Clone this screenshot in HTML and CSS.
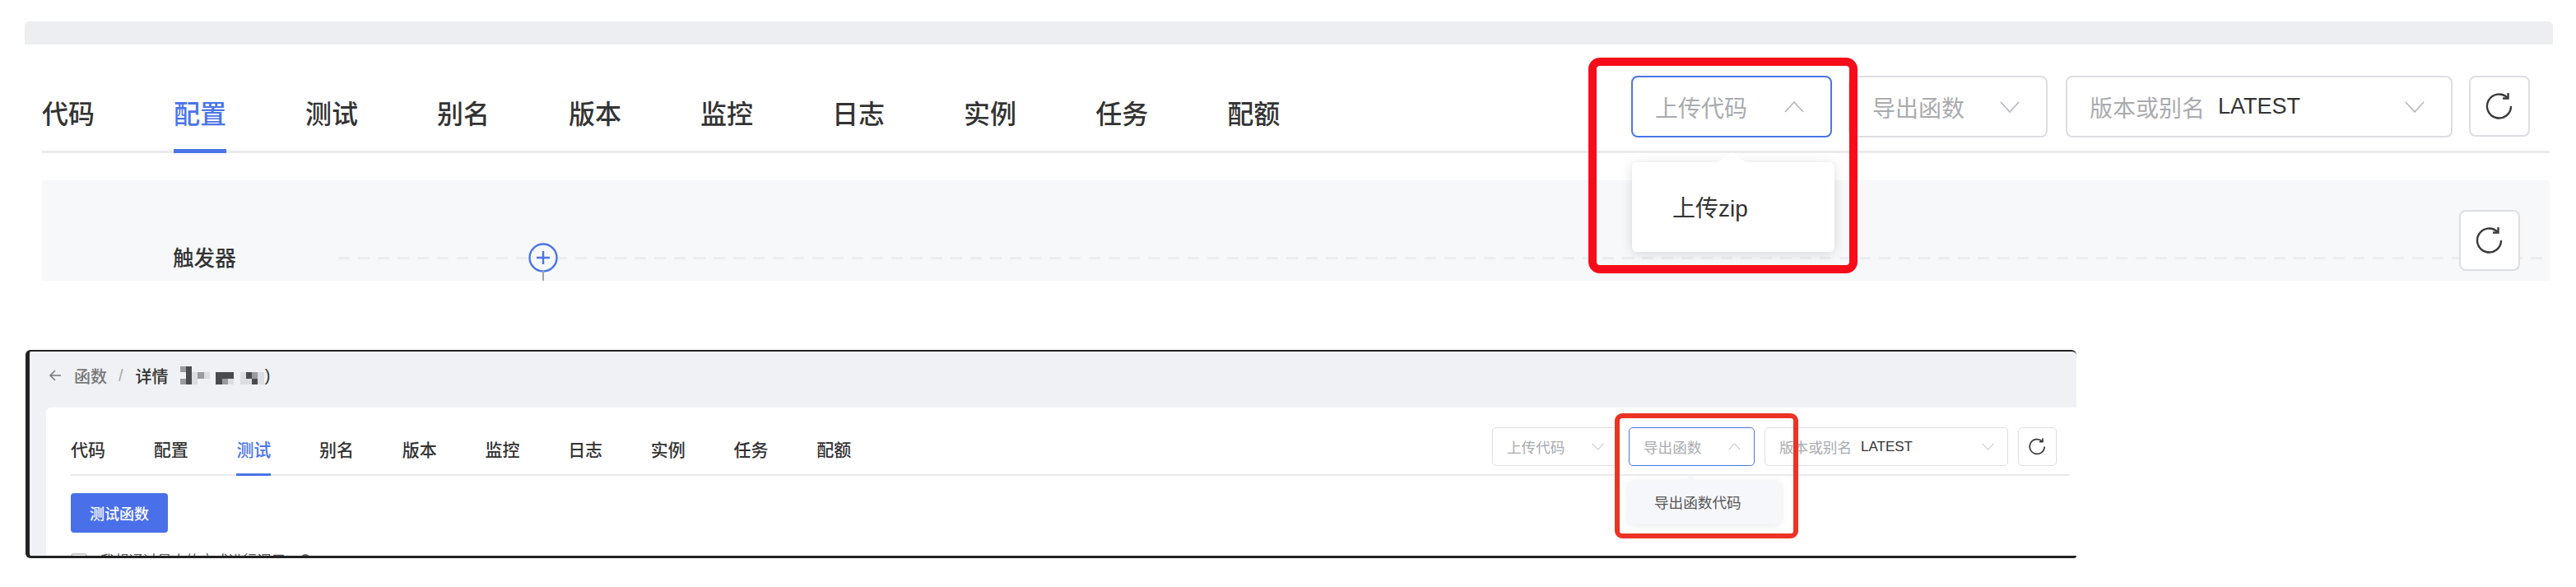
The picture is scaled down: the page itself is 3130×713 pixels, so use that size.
FILE: index.html
```html
<!DOCTYPE html>
<html lang="en">

<head>
  <meta charset="UTF-8">
  <title>函数详情</title>
  <link rel="stylesheet" href="styles.css">
</head>

<body>
  <!-- 上传代码 -->
  <section class="shot-top">
    <div class="top-bar"></div>
    <div class="top-body">
      <div class="tabs-row">
        <a class="tab">代码</a>
        <a class="tab active">配置</a>
        <a class="tab">测试</a>
        <a class="tab">别名</a>
        <a class="tab">版本</a>
        <a class="tab">监控</a>
        <a class="tab">日志</a>
        <a class="tab">实例</a>
        <a class="tab">任务</a>
        <a class="tab">配额</a>
        <div class="tools">
          <div class="select s-upload open">
            <span class="ph">上传代码</span>
            <svg class="chev" viewBox="0 0 24 14"><path d="M1 13 12 1l11 12"/></svg>
            <div class="menu">
              <i class="menu-arrow"></i>
              <div class="menu-item">上传zip</div>
            </div>
          </div>
          <div class="select s-export">
            <span class="ph">导出函数</span>
            <svg class="chev" viewBox="0 0 24 14"><path d="M1 1l11 12L23 1"/></svg>
          </div>
          <div class="select s-version">
            <span class="ph">版本或别名</span><span class="val">LATEST</span>
            <svg class="chev" viewBox="0 0 24 14"><path d="M1 1l11 12L23 1"/></svg>
          </div>
          <button class="refresh">
            <svg viewBox="0 0 34 34"><path d="M31 17A14.5 14.5 0 1 1 26.5 6.500"/><path d="M27.500 1v6.500H21"/></svg>
          </button>
        </div>
      </div>

      <div class="panel">
        <div class="trigger-row">
          <span class="trigger-label">触发器</span>
          <div class="track">
            <span class="add-btn">
              <svg viewBox="0 0 36 36"><circle cx="18" cy="18" r="16.500"/><path d="M10 18h16M18 10v16"/></svg>
            </span>
          </div>
        </div>
        <button class="refresh panel-refresh">
          <svg viewBox="0 0 34 34"><path d="M31 17A14.5 14.5 0 1 1 26.5 6.500"/><path d="M27.500 1v6.500H21"/></svg>
        </button>
      </div>
    </div>
    <div class="mark mark-upload"></div>
  </section>

  <!-- 导出函数 -->
  <section class="shot-bottom">
    <div class="crumbs">
      <svg class="back" viewBox="0 0 16 18"><path d="M15 9H2M8 3 2 9l6 6"/></svg>
      <span class="crumb-muted">函数</span>
      <span class="crumb-sep">/</span>
      <span class="crumb-cur">详情</span>
      <!-- 打码的名称 -->
      <span class="blur-name">
        <i class="m"></i><i class="d"></i><i></i><i></i><i></i><i></i><i></i><i></i><i></i><i></i><i></i><i></i><i></i><i></i>
        <i></i><i class="d"></i><i class="l"></i><i class="m"></i><i class="l"></i><i></i><i class="d"></i><i class="d"></i><i class="d"></i><i></i><i class="l"></i><i class="d"></i><i class="m"></i><i class="l"></i>
        <i class="m"></i><i class="d"></i><i class="l"></i><i></i><i></i><i></i><i class="d"></i><i class="m"></i><i class="l"></i><i></i><i class="l"></i><i class="l"></i><i class="d"></i><i class="l"></i>
      </span>
      <span class="crumb-cur">)</span>
    </div>
    <div class="card">
      <div class="tabs-row small">
        <a class="tab">代码</a>
        <a class="tab">配置</a>
        <a class="tab active">测试</a>
        <a class="tab">别名</a>
        <a class="tab">版本</a>
        <a class="tab">监控</a>
        <a class="tab">日志</a>
        <a class="tab">实例</a>
        <a class="tab">任务</a>
        <a class="tab">配额</a>
        <div class="tools">
          <div class="select s-upload">
            <span class="ph">上传代码</span>
            <svg class="chev" viewBox="0 0 24 14"><path d="M1 1l11 12L23 1"/></svg>
          </div>
          <div class="select s-export open">
            <span class="ph">导出函数</span>
            <svg class="chev" viewBox="0 0 24 14"><path d="M1 13 12 1l11 12"/></svg>
            <div class="menu">
              <i class="menu-arrow"></i>
              <div class="menu-item">导出函数代码</div>
            </div>
          </div>
          <div class="select s-version">
            <span class="ph">版本或别名</span><span class="val">LATEST</span>
            <svg class="chev" viewBox="0 0 24 14"><path d="M1 1l11 12L23 1"/></svg>
          </div>
          <button class="refresh">
            <svg viewBox="0 0 34 34"><path d="M31 17A14.5 14.5 0 1 1 26.5 6.500"/><path d="M27.500 1v6.500H21"/></svg>
          </button>
        </div>
      </div>
      <button class="btn-test">测试函数</button>
      <div class="check-row">
        <i class="checkbox"></i>
        <span class="check-text">我想通过最大的方式进行调用</span>
        <i class="dot"></i>
        <span class="check-val">00000</span>
      </div>
    </div>
    <div class="mark mark-export"></div>
  </section>
</body>

</html>
```

FILE: styles.css
```css
* {
  box-sizing: border-box;
}
body {
  margin: 0;
  background: #fff;
  font-family: "Liberation Sans", "Noto Sans CJK SC", sans-serif;
  color: #333;
}
svg {
  display: block;
  fill: none;
}

/* shared tabs */
.tabs-row {
  display: flex;
  align-items: flex-start;
  height: 132px;
  border-bottom: 3px solid #e9eaec;
  gap: 96px;
}
.tab {
  height: 132px;
  padding-top: 69px;
  font-size: 32px;
  line-height: 32px;
  font-weight: 500;
  color: #333;
  border-bottom: 5px solid transparent;
  flex: none;
}
.tab.active {
  color: #4a74e8;
  border-bottom-color: #4a74e8;
}
.tools {
  display: flex;
  margin-left: auto;
  margin-top: 38px;
  margin-right: 24px;
}

/* selects */
.select {
  position: relative;
  display: flex;
  align-items: center;
  flex: none;
  height: 75px;
  padding: 0 32px 0 27px;
  border: 2px solid #dcdee2;
  border-radius: 8px;
  font-size: 28px;
  background: #fff;
}
.select.open {
  border-color: #4a74e8;
}
.ph {
  color: #a9abaf;
}
.val {
  margin-left: 16px;
  font-size: 27px;
  color: #333;
}
.chev {
  width: 24px;
  height: 14px;
  margin-left: auto;
}
.chev path {
  stroke: #b4b6ba;
  stroke-width: 1.600;
}
.s-upload {
  width: 244px;
  margin-right: 20px;
}
.s-export {
  width: 242px;
  margin-right: 22px;
}
.s-version {
  width: 470px;
  margin-right: 20px;
}
.refresh {
  flex: none;
  width: 74px;
  height: 74px;
  padding: 18px;
  border: 2px solid #dcdee2;
  border-radius: 8px;
  background: #fff;
}
.refresh svg {
  width: 34px;
  height: 34px;
}
.refresh path {
  stroke: #3a3a3a;
  stroke-width: 2.400;
}

/* dropdown */
.menu {
  position: absolute;
  top: 103px;
  left: -1px;
  width: 246px;
  height: 109px;
  padding: 0 0 2px 49px;
  display: flex;
  align-items: center;
  background: #fff;
  border-radius: 6px;
  box-shadow: 0 2px 14px rgba(0, 0, 0, .14);
  z-index: 2;
}
.menu-arrow {
  position: absolute;
  top: -12px;
  left: 109px;
  width: 24px;
  height: 24px;
  background: #fff;
  transform: scaleY(.7) rotate(45deg);
}
.menu-item {
  position: relative;
  color: #333;
}

/* top shot */
.shot-top {
  position: relative;
  margin: 26px 28px 0 30px;
}
.top-bar {
  height: 28px;
  background: #eceef1;
  border-radius: 6px 6px 0 0;
}
.top-body {
  padding: 0 4px 0 21px;
}
.panel {
  position: relative;
  height: 122px;
  margin-top: 33px;
  padding-top: 75px;
  background: #f7f8fa;
  overflow: hidden;
}
.trigger-row {
  display: flex;
  align-items: center;
  height: 38px;
}
.trigger-label {
  flex: none;
  width: 360px;
  padding: 0 0 3px 159px;
  font-size: 25.600px;
  font-weight: 500;
  color: #333;
}
.track {
  position: relative;
  flex: 1;
  height: 3px;
  background: repeating-linear-gradient(90deg, #eceef1 0 14px, transparent 14px 24px);
}
.add-btn {
  position: absolute;
  top: -17px;
  left: 231px;
  width: 36px;
  height: 36px;
  background: #f7f8fa;
}
.add-btn::after {
  content: "";
  position: absolute;
  top: 34px;
  left: 17px;
  width: 2px;
  height: 14px;
  background: #a2a4a8;
}
.add-btn circle,
.add-btn path {
  stroke: #4a74e8;
  stroke-width: 2.400;
}
.panel-refresh {
  position: absolute;
  top: 36px;
  right: 36px;
}

/* annotation boxes */
.mark {
  position: absolute;
  pointer-events: none;
  z-index: 3;
}
.mark-upload {
  top: 44px;
  left: 1900px;
  width: 327px;
  height: 262px;
  border: 10px solid #f70d1a;
  border-radius: 14px;
}
.mark-export {
  top: 75px;
  left: 1926px;
  width: 223px;
  height: 152px;
  border: 6px solid #ec3324;
  border-radius: 9px;
}

/* bottom shot */
.shot-bottom {
  position: relative;
  width: 2492px;
  height: 253px;
  margin: 84px 0 0 31px;
  border-style: solid;
  border-color: #222;
  border-width: 2px 0 3px 5px;
  border-radius: 6px 6px 3px 6px;
  background: #eff1f4;
  overflow: hidden;
}
.crumbs {
  display: flex;
  align-items: center;
  height: 68px;
  padding: 0 0 10px 23px;
  font-size: 20px;
  font-weight: 500;
  color: #333;
}
.back {
  width: 16px;
  height: 18px;
  margin-right: 15px;
}
.back path {
  stroke: #777;
  stroke-width: 1.500;
}
.crumb-muted {
  color: #777;
}
.crumb-sep {
  margin: 0 15px 0 14px;
  color: #aaa;
  font-weight: 400;
}
.blur-name {
  display: grid;
  grid-template-columns: repeat(14, 7.300px);
  grid-auto-rows: 7.300px;
  margin: 0 1px 0 14px;
}
.blur-name .d {
  background: #4a4b4f;
}
.blur-name .m {
  background: #9a9b9f;
}
.blur-name .l {
  background: #dcdde1;
}
.card {
  height: 180px;
  margin-left: 20px;
  padding: 0 8px 0 30px;
  background: #fff;
  border-radius: 6px 0 0 0;
}
.tabs-row.small {
  height: 83px;
  border-bottom-width: 2px;
  gap: 58.700px;
}
.small .tab {
  height: 83px;
  padding-top: 41px;
  font-size: 21px;
  line-height: 21px;
  border-bottom-width: 3px;
}
.small .tools {
  margin-top: 24px;
  margin-right: 16px;
}
.small .select {
  height: 47px;
  padding: 0 16px 0 17px;
  font-size: 17.600px;
  border-width: 1.500px;
  border-radius: 5px;
}
.small .chev {
  width: 15px;
  height: 9px;
}
.small .val {
  margin-left: 11px;
  font-size: 17px;
}
.small .s-upload {
  width: 153px;
  margin-right: 13px;
}
.small .s-export {
  width: 153px;
  margin-right: 12px;
}
.small .s-version {
  width: 296px;
  margin-right: 12px;
}
.small .refresh {
  width: 47px;
  height: 47px;
  padding: 12px;
  border-width: 1.500px;
  border-radius: 5px;
}
.small .refresh svg {
  width: 21px;
  height: 21px;
}
.small .refresh path {
  stroke-width: 2.800;
}
.small .menu {
  top: 64px;
  left: -1px;
  width: 185px;
  height: 53px;
  padding-left: 31px;
  background: #f5f7fa;
  box-shadow: 0 1px 8px rgba(0, 0, 0, .1);
}
.small .menu-arrow {
  top: -6px;
  left: 69px;
  width: 13px;
  height: 13px;
  background: #f5f7fa;
}
.small .menu-item {
  color: #555;
}
.btn-test {
  display: block;
  width: 118px;
  height: 48px;
  margin-top: 21px;
  border: 0;
  border-radius: 4px;
  background: #4a70e9;
  color: #fff;
  font-family: inherit;
  font-size: 18px;
  font-weight: 500;
}
.check-row {
  display: flex;
  align-items: flex-start;
  margin-top: 25px;
  font-size: 17.300px;
  line-height: 18px;
}
.checkbox {
  flex: none;
  width: 20px;
  height: 20px;
  border: 2px solid #c8cacd;
  border-radius: 3px;
}
.check-text {
  margin-left: 16px;
  color: #555;
}
.dot {
  flex: none;
  width: 12px;
  height: 12px;
  margin: 1px 0 0 18px;
  border-radius: 50%;
  background: #666;
}
.check-val {
  margin-left: 48px;
  color: #555;
}
```
